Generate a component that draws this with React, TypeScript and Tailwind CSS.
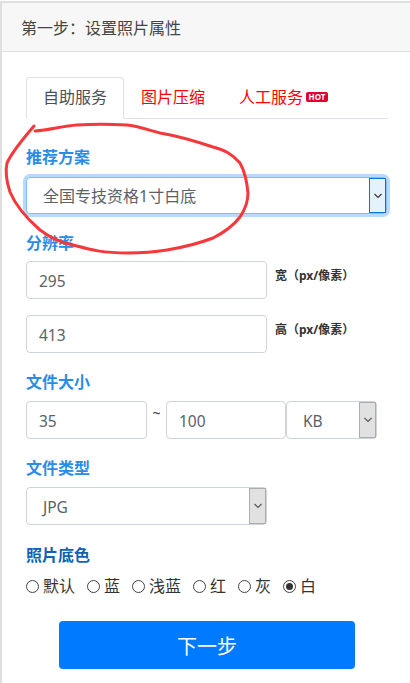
const font = { fontFamily: '"Noto Sans", "Noto Sans CJK SC", sans-serif' };

function Chevron({ color = "#333" }: { color?: string }) {
  return (
    <svg width="10" height="6" viewBox="0 0 10 6" fill="none">
      <path d="M1.5 1 L5 4.5 L8.5 1" stroke={color} strokeWidth="1.1" />
    </svg>
  );
}

function Box({ value, className }: { value: string; className: string }) {
  return (
    <div className={`flex h-[38px] items-center rounded-[4px] border border-[#ced4da] bg-white pt-[3px] pl-[12px] text-[15.5px] text-[#5a6268] ${className}`}>
      {value}
    </div>
  );
}

function SelectBox({ value, className }: { value: string; className: string }) {
  return (
    <div className={`flex h-[38px] items-stretch rounded-[4px] border border-[#ced4da] bg-white text-[15.5px] text-[#5a6268] ${className}`}>
      <div className="flex flex-1 items-center pt-[3px] pl-[16px]">{value}</div>
      <div className="flex w-[17px] items-center justify-center border border-[#adadad] bg-[#e1e1e1]">
        <Chevron color="#555" />
      </div>
    </div>
  );
}

function Label({ children, className = "text-[#2b8ce6]" }: { children: React.ReactNode; className?: string }) {
  return <div className={`h-[24px] text-[16px] leading-[24px] font-bold ${className}`}>{children}</div>;
}

function Radio({ label, checked }: { label: string; checked?: boolean }) {
  return (
    <div className="flex items-center gap-[4px]">
      <span className="flex h-[13px] w-[13px] items-center justify-center rounded-full border border-[#444] bg-white">
        {checked && <span className="h-[7px] w-[7px] rounded-full bg-[#333]" />}
      </span>
      <span>{label}</span>
    </div>
  );
}

export default function App() {
  return (
    <div style={font} className="relative h-[683px] w-[410px] overflow-hidden bg-white pt-[1px] text-[#333]">
      <div className="h-full border-t-2 border-l-2 border-[#dfdfdf]">
        <div className="flex h-[49px] items-center border-b border-[#dfdfdf] bg-[#f7f7f7] pt-[2px] pl-[19px] text-[16px] text-[#444]">
          第一步：设置照片属性
        </div>

        <div className="pt-[25px] pr-[22px] pl-[24px]">
          <div className="flex h-[42px] items-stretch border-b border-[#dee2e6] text-[16px]">
            <div className="mb-[-1px] flex w-[98px] items-center justify-center rounded-t-[4px] border border-[#dee2e6] border-b-white bg-white pb-[2px] text-[#495057]">
              自助服务
            </div>
            <div className="ml-[17px] flex items-center pb-[2px] text-[#ff0000]">图片压缩</div>
            <div className="ml-[34px] flex items-center pb-[2px] text-[#ff0000]">
              人工服务
              <span className="ml-[3px] flex h-[10px] w-[22px] items-center justify-center rounded-[2px] bg-[#e0002b] text-[8px] leading-none font-bold text-white">
                HOT
              </span>
            </div>
          </div>

          <div className="mt-[26px]"><Label>推荐方案</Label></div>
          <div className="mt-[8px] flex h-[37px] w-[361px] items-stretch rounded-[4px] border border-[#80bdff] bg-white text-[16px] text-[#5a6268] shadow-[0_0_0_3px_#b8daff]">
            <div className="flex flex-1 items-center pl-[16px]">全国专技资格1寸白底</div>
            <div className="flex w-[17px] items-center justify-center border border-[#0078d7] bg-[#e5f1fb]">
              <Chevron />
            </div>
          </div>

          <div className="mt-[17px]"><Label>分辨率</Label></div>
          <div className="mt-[6px] flex items-start">
            <Box value="295" className="w-[241px]" />
            <div className="mt-[6px] ml-[8px] text-[12px] leading-[18px] font-bold">宽（px/像素）</div>
          </div>
          <div className="mt-[16px] flex items-start">
            <Box value="413" className="w-[241px]" />
            <div className="mt-[6px] ml-[8px] text-[12px] leading-[18px] font-bold">高（px/像素）</div>
          </div>

          <div className="mt-[17px]"><Label>文件大小</Label></div>
          <div className="mt-[7px] flex items-start">
            <Box value="35" className="w-[121px]" />
            <span className="mt-[1px] flex w-[19px] justify-center text-[14px] leading-[21px]">~</span>
            <Box value="100" className="w-[120px]" />
            <SelectBox value="KB" className="w-[91px]" />
          </div>

          <div className="mt-[17px]"><Label>文件类型</Label></div>
          <div className="mt-[7px]"><SelectBox value="JPG" className="w-[241px]" /></div>

          <div className="mt-[18px]"><Label className="text-[#0f62b4]">照片底色</Label></div>
          <div className="mt-[7px] flex h-[24px] items-center gap-[12px] text-[16px] text-[#333]">
            <Radio label="默认" />
            <Radio label="蓝" />
            <Radio label="浅蓝" />
            <Radio label="红" />
            <Radio label="灰" />
            <Radio label="白" checked />
          </div>

          <div className="mt-[23px] ml-[33px] flex h-[48px] w-[296px] items-center justify-center rounded-[4px] bg-[#007bff] pt-[3px] text-[20px] text-white">
            下一步
          </div>
        </div>
      </div>

      <svg className="pointer-events-none absolute top-0 left-0" width="410" height="683" fill="none">
        <path
          d="M34 126 C24 138 13 150 7 163 C5 172 6 180 10 192 C15 204 24 216 40 230 C52 239 62 243 73 245 C88 249 100 253 128 253 C145 253 155 252 167 250 C185 247 200 243 213 238 C225 232 233 226 240 217 C246 208 248 200 248 193 C247 182 245 172 240 163 C232 154 225 150 213 147 C195 141 178 136 160 133 C148 130 138 126 127 125 C110 124 92 124 77 125 C62 126 50 130 35 131"
          stroke="#f5383b"
          strokeWidth="3"
          strokeLinecap="round"
        />
      </svg>
    </div>
  );
}
